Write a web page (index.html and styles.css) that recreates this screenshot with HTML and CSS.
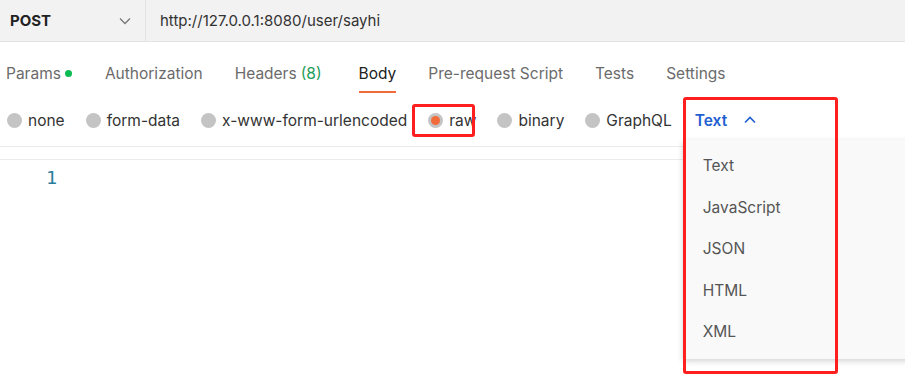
FILE: index.html
```html
<!DOCTYPE html>
<html>
<head>
<meta charset="utf-8">
<link rel="stylesheet" href="styles.css">
</head>
<body>
<div class="page">
  <div class="topbar">
    <div class="method">
      <span class="method-name">POST</span>
      <svg class="chev" width="12" height="8" viewBox="0 0 12 8"><path d="M1 1.5 L6 6.5 L11 1.5" fill="none" stroke="#777" stroke-width="1.3"/></svg>
    </div>
    <div class="url">http://127.0.0.1:8080/user/sayhi</div>
  </div>

  <div class="tabs">
    <div class="tab">Params<span class="dot"></span></div>
    <div class="tab">Authorization</div>
    <div class="tab">Headers <span class="green">(8)</span></div>
    <div class="tab active">Body</div>
    <div class="tab">Pre-request Script</div>
    <div class="tab">Tests</div>
    <div class="tab">Settings</div>
  </div>

  <div class="bodytypes">
    <label class="radio"><span class="circle"></span>none</label>
    <label class="radio"><span class="circle"></span>form-data</label>
    <label class="radio"><span class="circle"></span>x-www-form-urlencoded</label>
    <label class="radio raw"><span class="circle on"></span>raw<span class="mark mark-raw"></span></label>
    <label class="radio"><span class="circle"></span>binary</label>
    <label class="radio"><span class="circle"></span>GraphQL</label>
    <div class="lang">
      <span class="lang-name">Text</span>
      <svg class="up" width="12" height="8" viewBox="0 0 12 8"><path d="M1 6.5 L6 1.5 L11 6.5" fill="none" stroke="#1f5fd1" stroke-width="1.6"/></svg>
      <div class="menu">
        <div class="item">Text</div>
        <div class="item">JavaScript</div>
        <div class="item">JSON</div>
        <div class="item">HTML</div>
        <div class="item">XML</div>
      </div>
      <span class="mark mark-lang"></span>
    </div>
  </div>

  <div class="gap"></div>
  <div class="editor">
    <span class="lineno">1</span>
  </div>
</div>
</body>
</html>
```
FILE: styles.css
```css
* { box-sizing: border-box; }
html, body { margin: 0; padding: 0; background: #fff; }
body {
  font-family: Inter, "Open Sans", "Liberation Sans", sans-serif;
  width: 905px;
  height: 382px;
  overflow: hidden;
}
.page { position: relative; }

.topbar {
  display: flex;
  height: 42px;
  background: #f2f2f2;
  border-bottom: 1px solid #e3e3e3;
}
.method {
  width: 146px;
  display: flex;
  align-items: center;
  justify-content: space-between;
  padding: 0 14px 0 10px;
  border-right: 1px solid #e3e3e3;
}
.method-name { font-weight: 700; font-size: 15px; color: #222; }
.chev { margin-top: 1px; }
.url {
  display: flex;
  align-items: center;
  padding-left: 14px;
  font-size: 15px;
  color: #333;
}

.tabs {
  display: flex;
  align-items: stretch;
  height: 52px;
  padding-left: 6px;
  gap: 32px;
}
.tab {
  display: flex;
  align-items: center;
  font-size: 15.5px;
  color: #6b6b6b;
  padding-top: 10px;
  height: 52px;
  position: relative;
}
.tab:nth-child(2) { margin-left: 1px; }
.tab.active { color: #212121; margin-left: 5px; }
.tab.active::after {
  content: "";
  position: absolute;
  left: 0; right: 0; bottom: 1px;
  height: 2px;
  background: #f26b3a;
}
.dot {
  width: 7px; height: 7px;
  border-radius: 50%;
  background: #0cbb52;
  margin-left: 4px;
  margin-top: 1px;
}
.green { color: #1f9d5a; margin-left: 4px; }

.bodytypes {
  display: flex;
  align-items: center;
  height: 53px;
  padding-left: 7px;
  padding-top: 1px;
  border-bottom: 1px solid #ececec;
}
.radio {
  position: relative;
  display: flex;
  align-items: center;
  font-size: 15.5px;
  color: #333;
  margin-right: 21px;
}
.circle {
  width: 15px; height: 15px;
  border-radius: 50%;
  background: #c4c4c4;
  margin-right: 6px;
  position: relative;
}
.circle.on::after {
  content: "";
  position: absolute;
  left: 3px; top: 3px;
  width: 9px; height: 9px;
  border-radius: 50%;
  background: #f26b3a;
}
.lang {
  position: relative;
  display: flex;
  align-items: center;
  margin-left: 2px;
}
.lang-name { color: #1f5fd1; font-weight: 600; font-size: 15.5px; margin-right: 17px; }
.up { margin-top: -1px; }

.mark {
  position: absolute;
  border: 3px solid #ff1f1f;
  border-radius: 3px;
  pointer-events: none;
  z-index: 5;
}
.mark-raw { left: -16px; top: -7px; width: 63px; height: 33px; }
.mark-lang { left: -12px; top: -14px; width: 155px; height: 277px; }

.menu {
  position: absolute;
  left: -12px;
  top: 29px;
  width: 235px;
  height: 219px;
  background: #f9f9f9;
  box-shadow: 0 2px 6px rgba(0,0,0,0.18);
  padding-top: 5px;
  z-index: 4;
}
.item {
  height: 41.5px;
  display: flex;
  align-items: center;
  padding-left: 20px;
  font-size: 15.5px;
  color: #555;
}

.gap { height: 13px; border-bottom: 1px solid #ececec; }
.editor {
  height: 223px;
  padding: 7px 0 0 46px;
}
.lineno {
  font-family: "DejaVu Sans Mono", "Liberation Mono", monospace;
  font-size: 18.5px;
  color: #2a7e9c;
}
```
